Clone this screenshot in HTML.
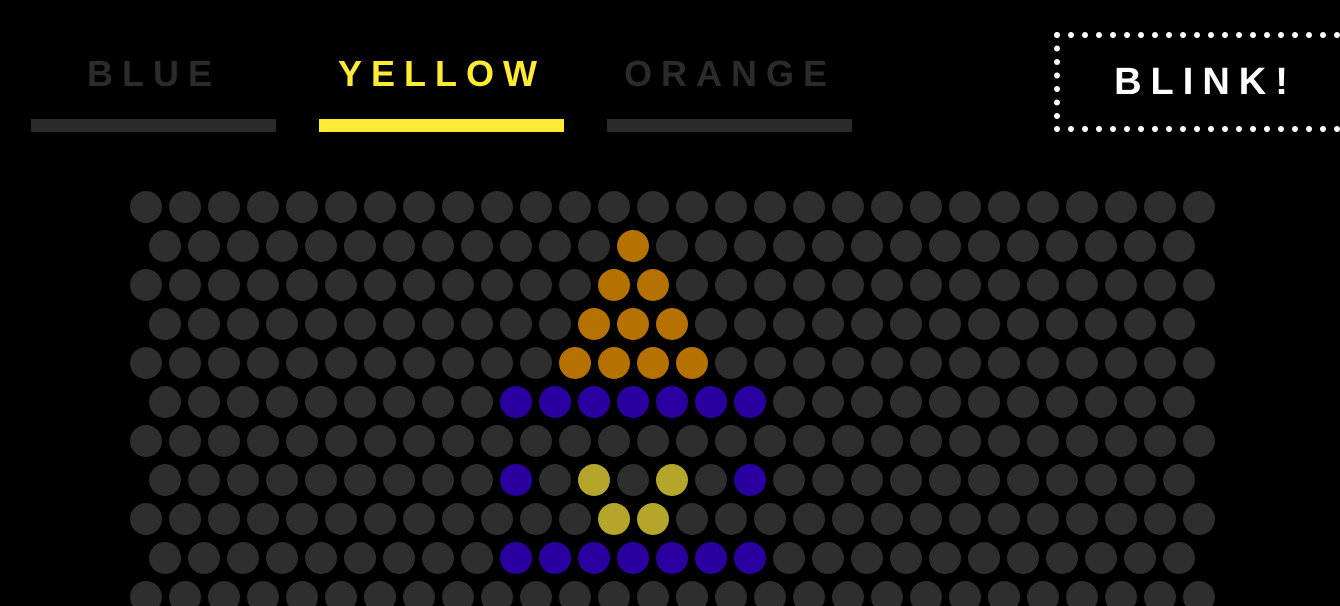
<!DOCTYPE html>
<html><head><style>
body{margin:0;background:#000;width:1340px;height:606px;overflow:hidden;position:relative;font-family:"Liberation Sans",sans-serif}
.t{position:absolute;top:52px;width:245px;text-align:center;font-weight:bold;font-size:36px;letter-spacing:9px;padding-left:1px;box-sizing:border-box;color:#2b2b2b;line-height:44px}
.b{position:absolute;top:119px;width:245px;height:13px;background:#2b2b2b}
#blink{position:absolute;left:1060px;top:58px;width:290px;text-align:center;color:#fff;font-weight:bold;font-size:38px;letter-spacing:9px;padding-left:1px;box-sizing:border-box;line-height:48px}
</style></head><body>
<div class="t" style="left:31px">BLUE</div>
<div class="t" style="left:319px;color:#ffeb33">YELLOW</div>
<div class="t" style="left:607px">ORANGE</div>
<div class="b" style="left:31px"></div>
<div class="b" style="left:319px;background:#ffeb33"></div>
<div class="b" style="left:607px"></div>
<svg id="s" width="1340" height="606" style="position:absolute;left:0;top:0"></svg>
<div id="blink">BLINK!</div>
<script>
var s=document.getElementById('s'),h='';
var O='#b57200',P='#2a00a0',Y='#b5a62b',G='#2e2e2e';
var col={'1,12':O,'2,12':O,'2,13':O,'3,11':O,'3,12':O,'3,13':O,'4,11':O,'4,12':O,'4,13':O,'4,14':O,'7,9':P,'7,11':Y,'7,13':Y,'7,15':P,'8,12':Y,'8,13':Y};
for(var k=9;k<=15;k++){col['5,'+k]=P;col['9,'+k]=P;}
for(var r=0;r<11;r++){var odd=r%2,n=odd?27:28,x0=odd?165:146,y=207+39*r;
for(var k=0;k<n;k++){h+='<circle cx="'+(x0+39*k)+'" cy="'+y+'" r="16" fill="'+(col[r+','+k]||G)+'"/>';}}
for(var x=1057;x<1345;x+=14){h+='<circle cx="'+x+'" cy="35" r="3" fill="#fff"/><circle cx="'+x+'" cy="129" r="3" fill="#fff"/>';}
for(var y=35;y<=129;y+=13.5){h+='<circle cx="1057" cy="'+y+'" r="3" fill="#fff"/>';}
s.innerHTML=h;
</script>
</body></html>
